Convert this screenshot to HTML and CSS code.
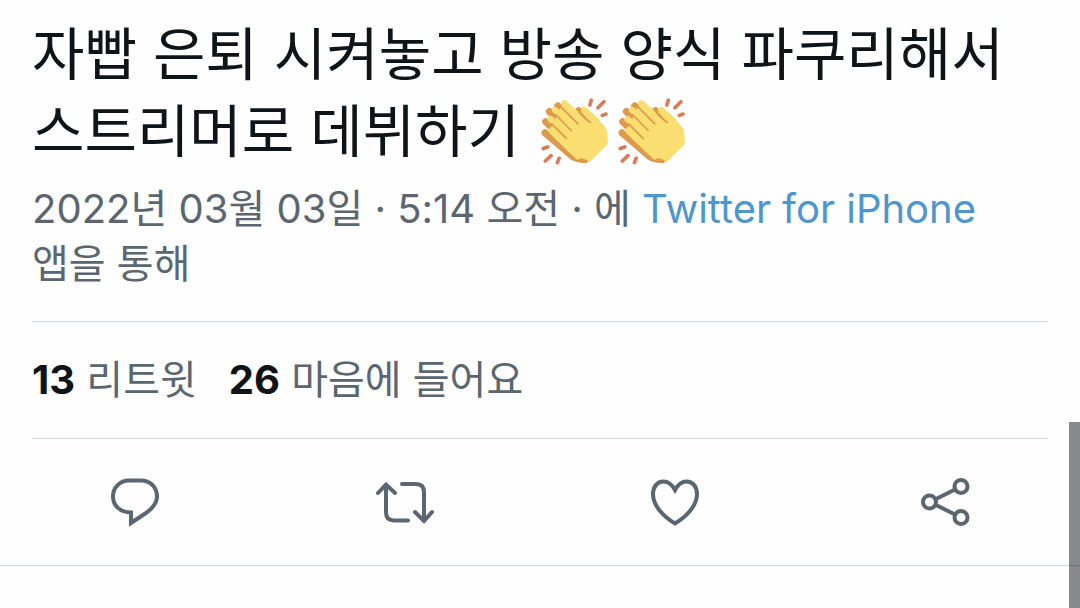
FILE: index.html
```
<!DOCTYPE html>
<html lang="ko">
    <head>
        <meta charset="utf-8">
        <title>트윗</title>
        <link rel="stylesheet" href="styles.css">
    </head>
    <body>
        <svg class="sprite" aria-hidden="true">
            <symbol id="clap" viewBox="0 0 200 200">
                <g fill="none" stroke-linecap="round" stroke-linejoin="round">
                    <path stroke="#dc9a4c" stroke-width="21" d="M50 24L90 64M25 40L80 95M14 71L80 135M12 104L92 173Q108 183 132 184M112 38L140 66"/>
                    <path stroke="#fade72" stroke-width="19" d="M69 16L130 77M42 36L110 103M29 63L110 141M31 97L110 174M129 36L165 68"/>
                    <path fill="#fade72" stroke="none" d="M26 105L84 162Q98 176 120 180Q138 183 145 192L200 137L197 98Q194 87 184 78L136 29L120 42L145 70L76 10L60 24L44 60L30 88Z"/>
                    <path stroke="#dc9a4c" stroke-width="5" d="M58 25L110 77M44 50L90 97M32 77L76 121M110 36Q124 58 147 73"/>
                    <path stroke="#d67e59" stroke-width="11" d="M150 7L146 21M188 11L170 29M194 48L183 52M20 146L7 151M30 172L13 188M54 180L49 193"/>
                </g>
            </symbol>
        </svg>

        <article class="tweet">
            <div class="content">
                <p class="text">자빱 은퇴 시켜놓고 방송 양식 파쿠리해서 스트리머로 데뷔하기 <svg class="emoji" role="img" aria-label="박수"><use href="#clap"/></svg><svg class="emoji" role="img" aria-label="박수"><use href="#clap"/></svg></p>
                <p class="meta">2022년 03월 03일 · 5:14 오전 · 에 <a href="#">Twitter for iPhone</a> 앱을 통해</p>
                <div class="stats">
                    <a href="#"><b>13</b> 리트윗</a>
                    <a href="#"><b>26</b> 마음에 들어요</a>
                </div>
            </div>
            <div class="actions">
                <button type="button" aria-label="답글">
                    <svg viewBox="0 0 60 60"><path d="M26 40.500V51L41 41C48 36 52 31 52 24.500C52 15 45 8.500 36 8.500H24C15 8.500 8 15.500 8 24.500C8 33.500 15 40.500 26 40.500Z"/></svg>
                </button>
                <button type="button" aria-label="리트윗">
                    <svg viewBox="0 0 60 60"><path d="M3 21L11 12.500L20 21M11 13V40Q11 48.500 19 48.500H33M27 12H41Q49 12 49 20V49M40 40L49 49L57 40"/></svg>
                </button>
                <button type="button" aria-label="마음에 들어요">
                    <svg viewBox="0 0 60 60"><path d="M30 18C27 12.500 23 9.500 18.500 9.500C12 9.500 8 15 8 22C8 34 19 45 30 51.500C41 45 52 34 52 22C52 15 48 9.500 41.500 9.500C37 9.500 33 12.500 30 18Z"/></svg>
                </button>
                <button type="button" aria-label="공유">
                    <svg viewBox="0 0 60 60"><circle cx="14.500" cy="30" r="6.500"/><circle cx="46" cy="14.500" r="6.500"/><circle cx="46" cy="45.500" r="6.500"/><path d="M21 27L40 17.500M21 33L40 42.500"/></svg>
                </button>
            </div>
        </article>
        <div class="scrollbar"></div>
    </body>
</html>
```

FILE: styles.css
```
body {
    margin: 0;
    background: #fefefe;
    color: #0f1419;
    font-family: Inter, "Noto Sans CJK KR", sans-serif;
    word-break: keep-all;
}
p {
    margin: 0;
}
a {
    color: inherit;
    text-decoration: none;
}
.sprite {
    display: none;
}
.tweet {
    padding-top: 16px;
    border-bottom: 1px solid #cfd9de;
}
.content {
    margin: 0 32px;
}
.text {
    font-size: 57px;
    line-height: 77px;
}
.emoji {
    width: 67px;
    height: 67px;
    margin: 0 5px;
    vertical-align: -13px;
}
.meta {
    padding: 11px 0 30px;
    border-bottom: 1px solid #cfd9de;
    color: #5b6670;
    font-size: 40px;
    line-height: 55px;
}
.meta a {
    color: #4f96cc;
}
.stats {
    display: flex;
    gap: 32px;
    padding: 30px 0;
    border-bottom: 1px solid #cfd9de;
    color: #5b6670;
    font-size: 40px;
    line-height: 56px;
}
.stats b {
    color: #0f1419;
    font-weight: 700;
}
.actions {
    display: grid;
    grid-template-columns: repeat(4, 1fr);
    justify-items: center;
    padding: 33px 0;
}
.actions button {
    padding: 0;
    border: 0;
    background: none;
    color: #5b6670;
    cursor: pointer;
}
.actions svg {
    display: block;
    width: 60px;
    height: 60px;
    fill: none;
    stroke: currentColor;
    stroke-width: 4;
    stroke-linecap: round;
}
.scrollbar {
    position: fixed;
    top: 422px;
    right: 0;
    bottom: 0;
    width: 11px;
    background: rgba(15, 20, 25, 0.5);
}
```
